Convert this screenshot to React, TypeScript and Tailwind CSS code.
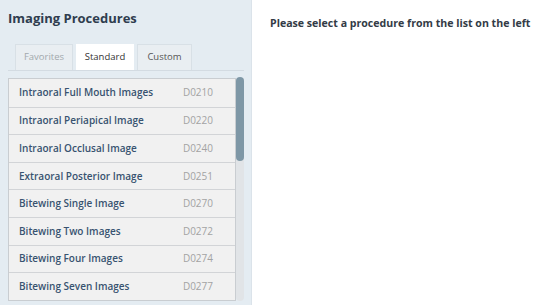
import React from "react";

const items: [string, string][] = [
  ["Intraoral Full Mouth Images", "D0210"],
  ["Intraoral Periapical Image", "D0220"],
  ["Intraoral Occlusal Image", "D0240"],
  ["Extraoral Posterior Image", "D0251"],
  ["Bitewing Single Image", "D0270"],
  ["Bitewing Two Images", "D0272"],
  ["Bitewing Four Images", "D0274"],
  ["Bitewing Seven Images", "D0277"],
];

export default function App() {
  return (
    <div
      className="flex h-[305px] w-[544px] overflow-hidden bg-white"
      style={{ fontFamily: '"Open Sans", "Noto Sans", sans-serif' }}
    >
      <div className="flex w-[252px] shrink-0 flex-col border-r border-[#dbe3ea] bg-[#e4ecf2] pl-[8px] pr-[7px]">
        <div className="pt-[8px] text-[13px] font-bold leading-[20px] text-[#2f3d4f]">
          Imaging Procedures
        </div>
        <div className="mt-[16px] flex gap-[3px] border-b border-[#d3dbe2] pl-[7px]">
          <div className="flex h-[26px] w-[58px] items-center justify-center border border-b-0 border-[#d8e0e6] bg-[#e9eef2] text-[9.5px] text-[#a3a9ad]">
            Favorites
          </div>
          <div className="flex h-[26px] w-[58px] items-center justify-center bg-white text-[9.5px] text-[#333]">
            Standard
          </div>
          <div className="flex h-[26px] w-[55px] items-center justify-center border border-b-0 border-[#d8e0e6] bg-[#e9eef2] text-[9.5px] text-[#555]">
            Custom
          </div>
        </div>
        <div className="mt-[7px] flex">
          <div className="w-[229px] border border-[#c9cdd1] bg-[#f1f1f1]">
            {items.map(([name, code], i) => (
              <div
                key={code}
                className={`flex h-[27.6px] items-center justify-between pl-[10px] pr-[22px] text-[10px] ${
                  i > 0 ? "border-t border-[#d2d4d7]" : ""
                }`}
              >
                <span className="font-semibold text-[#385370]">{name}</span>
                <span className="text-[#a3a3a3]">{code}</span>
              </div>
            ))}
          </div>
          <div className="relative w-[8px] rounded-b-[4px] bg-[#e1e4e7]">
            <div className="absolute left-0 top-[-1px] h-[84px] w-[8px] rounded-[4px] bg-[#7e97a6]" />
          </div>
        </div>
      </div>
      <div className="flex-1 pl-[18px] pt-[16px] text-[10.6px] font-bold text-[#333b46]">
        Please select a procedure from the list on the left
      </div>
    </div>
  );
}
